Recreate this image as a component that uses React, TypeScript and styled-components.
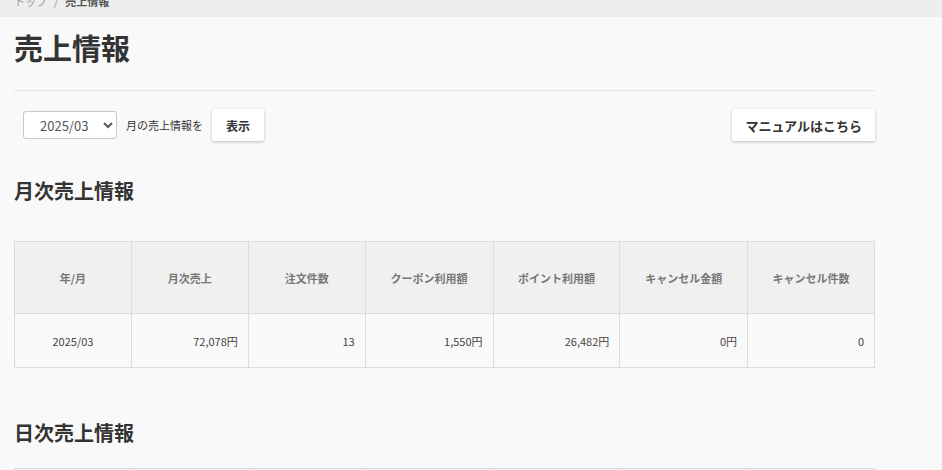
import styled, { createGlobalStyle } from "styled-components";

const GlobalStyle = createGlobalStyle`
  html, body {
    margin: 0;
    padding: 0;
    background: #f9f9f9;
    font-family: "Noto Sans CJK JP", "Noto Sans", "Liberation Sans", sans-serif;
    color: #333;
  }
`;

const Breadcrumb = styled.nav`
  height: 17px;
  background: #eeeeee;
  overflow: hidden;
  padding-left: 14px;
  font-size: 11px;
  color: #999;
`;

const Crumbs = styled.div`
  margin-top: -7px;
  line-height: 16px;
  display: flex;
  gap: 7px;
`;

const Current = styled.span`
  color: #555;
  font-weight: bold;
`;

const Main = styled.main`
  width: 861px;
  padding: 0 14px;
`;

const Title = styled.h1`
  margin: 12px 0 25px;
  font-size: 29px;
  line-height: 36px;
  font-weight: bold;
  color: #333;
`;

const Rule = styled.hr`
  margin: 0;
  border: none;
  border-top: 1px solid #e3e3e3;
`;

const Controls = styled.div`
  display: flex;
  align-items: center;
  justify-content: space-between;
  padding-top: 18px;
`;

const Filter = styled.div`
  display: flex;
  align-items: center;
  padding-left: 9px;
  gap: 9px;
  font-size: 11px;
  color: #333;
`;

const Select = styled.select`
  width: 94px;
  height: 28px;
  border: 1px solid #c8c8c8;
  border-radius: 3px;
  background: #fff;
  font-family: inherit;
  font-size: 13px;
  color: #555;
  padding: 0 4px 0 12px;
`;

const Button = styled.button<{ $wide?: boolean }>`
  height: 32px;
  padding: 0 ${(p) => (p.$wide ? "13px" : "14px")};
  background: #fff;
  border: none;
  border-radius: 2px;
  box-shadow: 0 1px 3px rgba(0, 0, 0, 0.25);
  font-family: inherit;
  font-size: ${(p) => (p.$wide ? "13px" : "12px")};
  font-weight: bold;
  color: #333;
`;

const Heading = styled.h2<{ $top: number; $bottom: number }>`
  margin: ${(p) => p.$top}px 0 ${(p) => p.$bottom}px;
  font-size: 20px;
  line-height: 26px;
  font-weight: bold;
  color: #333;
`;

const Table = styled.table`
  width: 861px;
  border-collapse: collapse;
  table-layout: fixed;
  font-size: 11px;
`;

const Th = styled.th<{ $w: number }>`
  width: ${(p) => (p.$w / 861) * 100}%;
  height: 71px;
  padding: 0;
  background: #f0f0f0;
  border: 1px solid #dcdcdc;
  color: #777;
  font-weight: bold;
  text-align: center;
`;

const Td = styled.td<{ $center?: boolean }>`
  height: 53px;
  border: 1px solid #dcdcdc;
  color: #444;
  text-align: ${(p) => (p.$center ? "center" : "right")};
  padding: 0 10px;
`;

const columns = [
  { label: "年/月", w: 117 },
  { label: "月次売上", w: 117 },
  { label: "注文件数", w: 117 },
  { label: "クーポン利用額", w: 128 },
  { label: "ポイント利用額", w: 127 },
  { label: "キャンセル金額", w: 128 },
  { label: "キャンセル件数", w: 127 },
];

const row = ["2025/03", "72,078円", "13", "1,550円", "26,482円", "0円", "0"];

const HeaderRow = () => (
  <thead>
    <tr>
      {columns.map((c) => (
        <Th key={c.label} $w={c.w}>
          {c.label}
        </Th>
      ))}
    </tr>
  </thead>
);

export default function App() {
  return (
    <>
      <GlobalStyle />
      <Breadcrumb>
        <Crumbs>
          <span>トップ</span>
          <span>/</span>
          <Current>売上情報</Current>
        </Crumbs>
      </Breadcrumb>
      <Main>
        <Title>売上情報</Title>
        <Rule />
        <Controls>
          <Filter>
            <Select defaultValue="2025/03">
              <option>2025/03</option>
              <option>2025/02</option>
              <option>2025/01</option>
            </Select>
            <span>月の売上情報を</span>
            <Button>表示</Button>
          </Filter>
          <Button $wide>マニュアルはこちら</Button>
        </Controls>

        <Heading $top={37} $bottom={37}>月次売上情報</Heading>
        <Table>
          <HeaderRow />
          <tbody>
            <tr>
              {row.map((v, i) => (
                <Td key={i} $center={i === 0}>
                  {v}
                </Td>
              ))}
            </tr>
          </tbody>
        </Table>

        <Heading $top={52} $bottom={22}>日次売上情報</Heading>
        <Table>
          <HeaderRow />
        </Table>
      </Main>
    </>
  );
}
